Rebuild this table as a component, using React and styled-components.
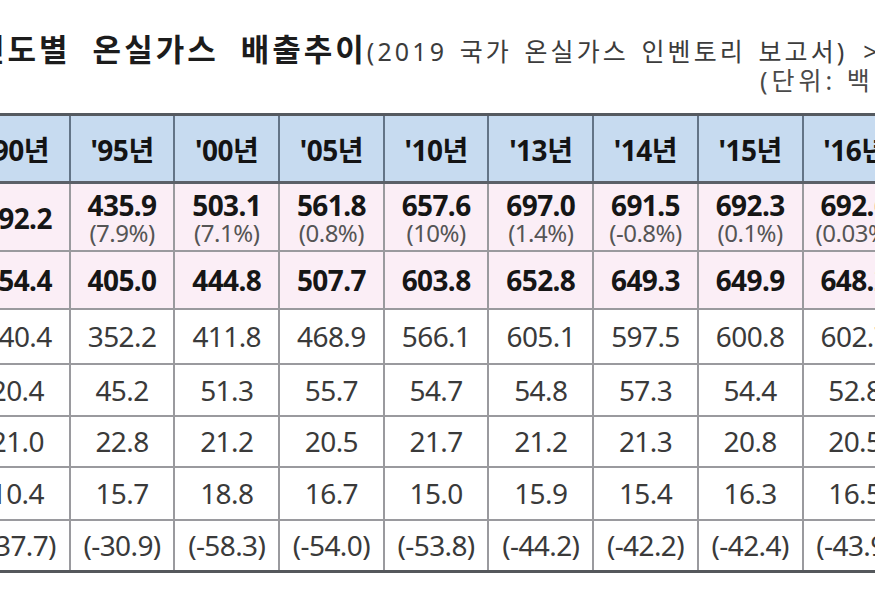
import React from "react";
import styled, { createGlobalStyle } from "styled-components";

const GlobalStyle = createGlobalStyle`
  html, body { margin: 0; padding: 0; background: #ffffff; }
  body { overflow: hidden; }
  #root { width: 875px; height: 593px; overflow: hidden; }
`;

const FONT = `"Noto Sans", "Noto Sans CJK KR", sans-serif`;

const Viewport = styled.div`
  width: 875px;
  height: 593px;
  overflow: hidden;
  background: #ffffff;
  font-family: ${FONT};
`;

const Sheet = styled.div`
  width: 1047px;
  margin-left: -36px;
  padding-top: 32px;
  display: flex;
  flex-direction: column;
`;

const Heading = styled.div`
  display: flex;
  align-items: baseline;
  white-space: nowrap;
  padding-left: 12px;
  height: 34px;
  line-height: 34px;
`;

const Title = styled.span`
  font-size: 31px;
  font-weight: 700;
  color: #1c1c1c;
  letter-spacing: 3px;
  word-spacing: 11px;
`;

const Sub = styled.span`
  font-size: 25px;
  font-weight: 400;
  color: #3c3c3c;
  letter-spacing: 3.1px;
  word-spacing: 3px;
`;

const Mark = styled.span`
  margin-left: 16px;
  font-size: 25px;
  color: #3c3c3c;
`;

const Unit = styled.div`
  padding-left: 796px;
  white-space: nowrap;
  font-size: 25px;
  line-height: 28px;
  height: 28px;
  color: #4a4a4a;
  letter-spacing: 4px;
`;

const Table = styled.table`
  margin-top: 19px;
  width: 1047px;
  table-layout: fixed;
  border-collapse: collapse;
  border-top: 3px solid #555a60;
  border-bottom: 3px solid #55585c;
`;

const HeadCell = styled.th`
  height: 65px;
  padding: 0;
  background: #c7dbf0;
  border-left: 2px solid #637487;
  border-right: 2px solid #637487;
  border-bottom: 3px solid #5b6068;
  font-size: 28px;
  font-weight: 700;
  color: #141414;
  text-align: center;
  vertical-align: middle;
  letter-spacing: -0.5px;
`;

const Row = styled.tr`
  height: ${(p) => p.$h}px;
  background: ${(p) => (p.$pink ? "#fbeef6" : "#ffffff")};
`;

const Cell = styled.td`
  padding: ${(p) => (p.$tall ? "3px 0 0" : "0")};
  border: 2px solid #9a9a9e;
  text-align: center;
  vertical-align: middle;
  font-size: 28px;
  line-height: 30px;
  font-weight: ${(p) => (p.$bold ? 700 : 400)};
  color: ${(p) => (p.$bold ? "#161616" : "#3a3a3a")};
  letter-spacing: -0.6px;
`;

const Main = styled.span`
  display: block;
  line-height: 30px;
`;

const Pct = styled.span`
  display: block;
  font-size: 24px;
  line-height: 26px;
  font-weight: 400;
  color: #555555;
  letter-spacing: -0.5px;
`;

const years = ["'90년", "'95년", "'00년", "'05년", "'10년", "'13년", "'14년", "'15년", "'16년", "'17년"];

const totals = [
  ["292.2", null],
  ["435.9", "(7.9%)"],
  ["503.1", "(7.1%)"],
  ["561.8", "(0.8%)"],
  ["657.6", "(10%)"],
  ["697.0", "(1.4%)"],
  ["691.5", "(-0.8%)"],
  ["692.3", "(0.1%)"],
  ["692.6", "(0.03%)"],
  ["709.1", "(2.4%)"],
];

const rows = [
  { h: 58, pink: true, bold: true, v: ["254.4", "405.0", "444.8", "507.7", "603.8", "652.8", "649.3", "649.9", "648.2", "667.6"] },
  { h: 55, v: ["240.4", "352.2", "411.8", "468.9", "566.1", "605.1", "597.5", "600.8", "602.7", "615.8"] },
  { h: 52, v: ["20.4", "45.2", "51.3", "55.7", "54.7", "54.8", "57.3", "54.4", "52.8", "56.0"] },
  { h: 51, v: ["21.0", "22.8", "21.2", "20.5", "21.7", "21.2", "21.3", "20.8", "20.5", "20.4"] },
  { h: 53, v: ["10.4", "15.7", "18.8", "16.7", "15.0", "15.9", "15.4", "16.3", "16.5", "17.0"] },
  { h: 52, v: ["(-37.7)", "(-30.9)", "(-58.3)", "(-54.0)", "(-53.8)", "(-44.2)", "(-42.2)", "(-42.4)", "(-43.9)", "(-41.6)"] },
];

export default function App() {
  return (
    <Viewport>
      <GlobalStyle />
      <Sheet>
        <Heading>
          <Title>연도별 온실가스 배출추이</Title>
          <Sub>(2019 국가 온실가스 인벤토리 보고서)</Sub>
          <Mark>&gt;</Mark>
        </Heading>
        <Unit>(단위: 백만톤CO₂eq.)</Unit>
        <Table>
          <colgroup>
            {years.map((y) => (
              <col key={y} style={{ width: "104.7px" }} />
            ))}
          </colgroup>
          <thead>
            <tr>
              {years.map((y) => (
                <HeadCell key={y}>{y}</HeadCell>
              ))}
            </tr>
          </thead>
          <tbody>
            <Row $h={68} $pink>
              {totals.map(([m, p], i) => (
                <Cell key={i} $bold $tall>
                  <Main>{m}</Main>
                  {p && <Pct>{p}</Pct>}
                </Cell>
              ))}
            </Row>
            {rows.map((r, ri) => (
              <Row key={ri} $h={r.h} $pink={r.pink}>
                {r.v.map((v, i) => (
                  <Cell key={i} $bold={r.bold}>
                    {v}
                  </Cell>
                ))}
              </Row>
            ))}
          </tbody>
        </Table>
      </Sheet>
    </Viewport>
  );
}
